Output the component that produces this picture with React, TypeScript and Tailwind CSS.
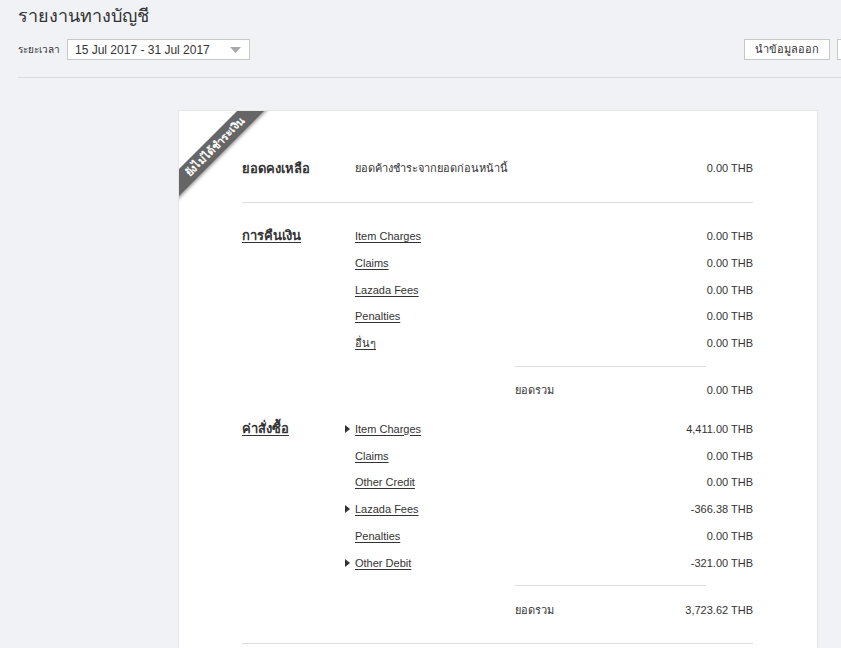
// Accounting statement page: header filter bar + statement card with ribbon.

const FONT = { fontFamily: 'Tahoma, "Liberation Sans", "DejaVu Sans", "Noto Sans", sans-serif' };

type Row = { label: string; amount: string; caret?: boolean };

const refunds: Row[] = [
  { label: "Item Charges", amount: "0.00 THB" },
  { label: "Claims", amount: "0.00 THB" },
  { label: "Lazada Fees", amount: "0.00 THB" },
  { label: "Penalties", amount: "0.00 THB" },
  { label: "อื่นๆ", amount: "0.00 THB" },
];

const orders: Row[] = [
  { label: "Item Charges", amount: "4,411.00 THB", caret: true },
  { label: "Claims", amount: "0.00 THB" },
  { label: "Other Credit", amount: "0.00 THB" },
  { label: "Lazada Fees", amount: "-366.38 THB", caret: true },
  { label: "Penalties", amount: "0.00 THB" },
  { label: "Other Debit", amount: "-321.00 THB", caret: true },
];

function Caret() {
  return (
    <svg width="5" height="8" viewBox="0 0 5 8" className="absolute -left-[10px] top-1/2 -translate-y-1/2">
      <path d="M0 0 5 4 0 8z" fill="#333" />
    </svg>
  );
}

function Section({ title, rows, total }: { title: string; rows: Row[]; total: string }) {
  return (
    <div className="flex">
      <div className="w-[113px] shrink-0 h-[26.8px] flex items-center">
        <span className="text-[13px] font-bold text-[#333] underline underline-offset-2">{title}</span>
      </div>
      <div className="flex-1">
        {rows.map((r, i) => (
          <div key={i} className="h-[26.8px] flex items-center justify-between text-[11px] text-[#333]">
            <span className="relative underline underline-offset-2">
              {r.caret && <Caret />}
              {r.label}
            </span>
            <span>{r.amount}</span>
          </div>
        ))}
        <div className="ml-[160px] mr-[47px] mt-[9px] border-t border-[#dcdcdc]" />
        <div className="ml-[160px] mt-[10px] h-[26.8px] flex items-center justify-between text-[11px] text-[#333]">
          <span>ยอดรวม</span>
          <span>{total}</span>
        </div>
      </div>
    </div>
  );
}

function Ribbon() {
  return (
    <div className="absolute left-0 top-0 w-[100px] h-[100px] overflow-hidden pointer-events-none">
      <div className="absolute left-[-39.5px] top-[26px] w-[150px] h-[19px] -rotate-45 bg-[#666] shadow-[0_2px_3px_rgba(0,0,0,0.35)] flex items-center justify-center">
        <span className="text-[11px] font-bold text-white leading-none">ยังไม่ได้ชำระเงิน</span>
      </div>
    </div>
  );
}

export default function App() {
  return (
    <div className="w-[841px] h-[648px] overflow-hidden bg-[#f1f2f6] text-[#333]" style={FONT}>
      <div className="pl-[18px]">
        <div className="h-[32px] flex items-center">
          <h1 className="text-[18px] text-[#333]">รายงานทางบัญชี</h1>
        </div>
        <div className="h-[45px] flex items-start pt-[7px]">
          <span className="w-[49px] shrink-0 text-[10px] h-[21px] flex items-center">ระยะเวลา</span>
          <div className="w-[183px] h-[21px] bg-white border border-[#c8c8c8] flex items-center justify-between pl-[7px] pr-[8px]">
            <span className="text-[12px]">15 Jul 2017 - 31 Jul 2017</span>
            <svg width="11" height="6" viewBox="0 0 11 6">
              <path d="M0 0h11L5.5 6z" fill="#a9a9a9" />
            </svg>
          </div>
          <div className="flex-1" />
          <button className="w-[86px] h-[21px] bg-white border border-[#c8c8c8] text-[11px] flex items-center justify-center">
            นำข้อมูลออก
          </button>
          <button className="ml-[7px] w-[40px] shrink-0 h-[21px] bg-white border border-[#c8c8c8] mr-[-36px]" />
        </div>
        <div className="border-t border-[#dcdcdc]" />
      </div>

      <div className="mt-[32px] ml-[178px] w-[640px] bg-white border border-[#e6e6e6] relative pl-[63px] pr-[64px] pt-[44px]">
        <Ribbon />
        <div className="flex h-[26.8px] items-center">
          <div className="w-[113px] shrink-0 text-[13px] font-bold">ยอดคงเหลือ</div>
          <div className="flex-1 flex items-center justify-between text-[11px]">
            <span>ยอดค้างชำระจากยอดก่อนหน้านี้</span>
            <span>0.00 THB</span>
          </div>
        </div>
        <div className="mt-[20px] border-t border-[#dcdcdc]" />
        <div className="pt-[20px]">
          <Section title="การคืนเงิน" rows={refunds} total="0.00 THB" />
        </div>
        <div className="pt-[12px]">
          <Section title="ค่าสั่งซื้อ" rows={orders} total="3,723.62 THB" />
        </div>
        <div className="mt-[20px] border-t border-[#dcdcdc]" />
        <div className="h-[40px]" />
      </div>
    </div>
  );
}
